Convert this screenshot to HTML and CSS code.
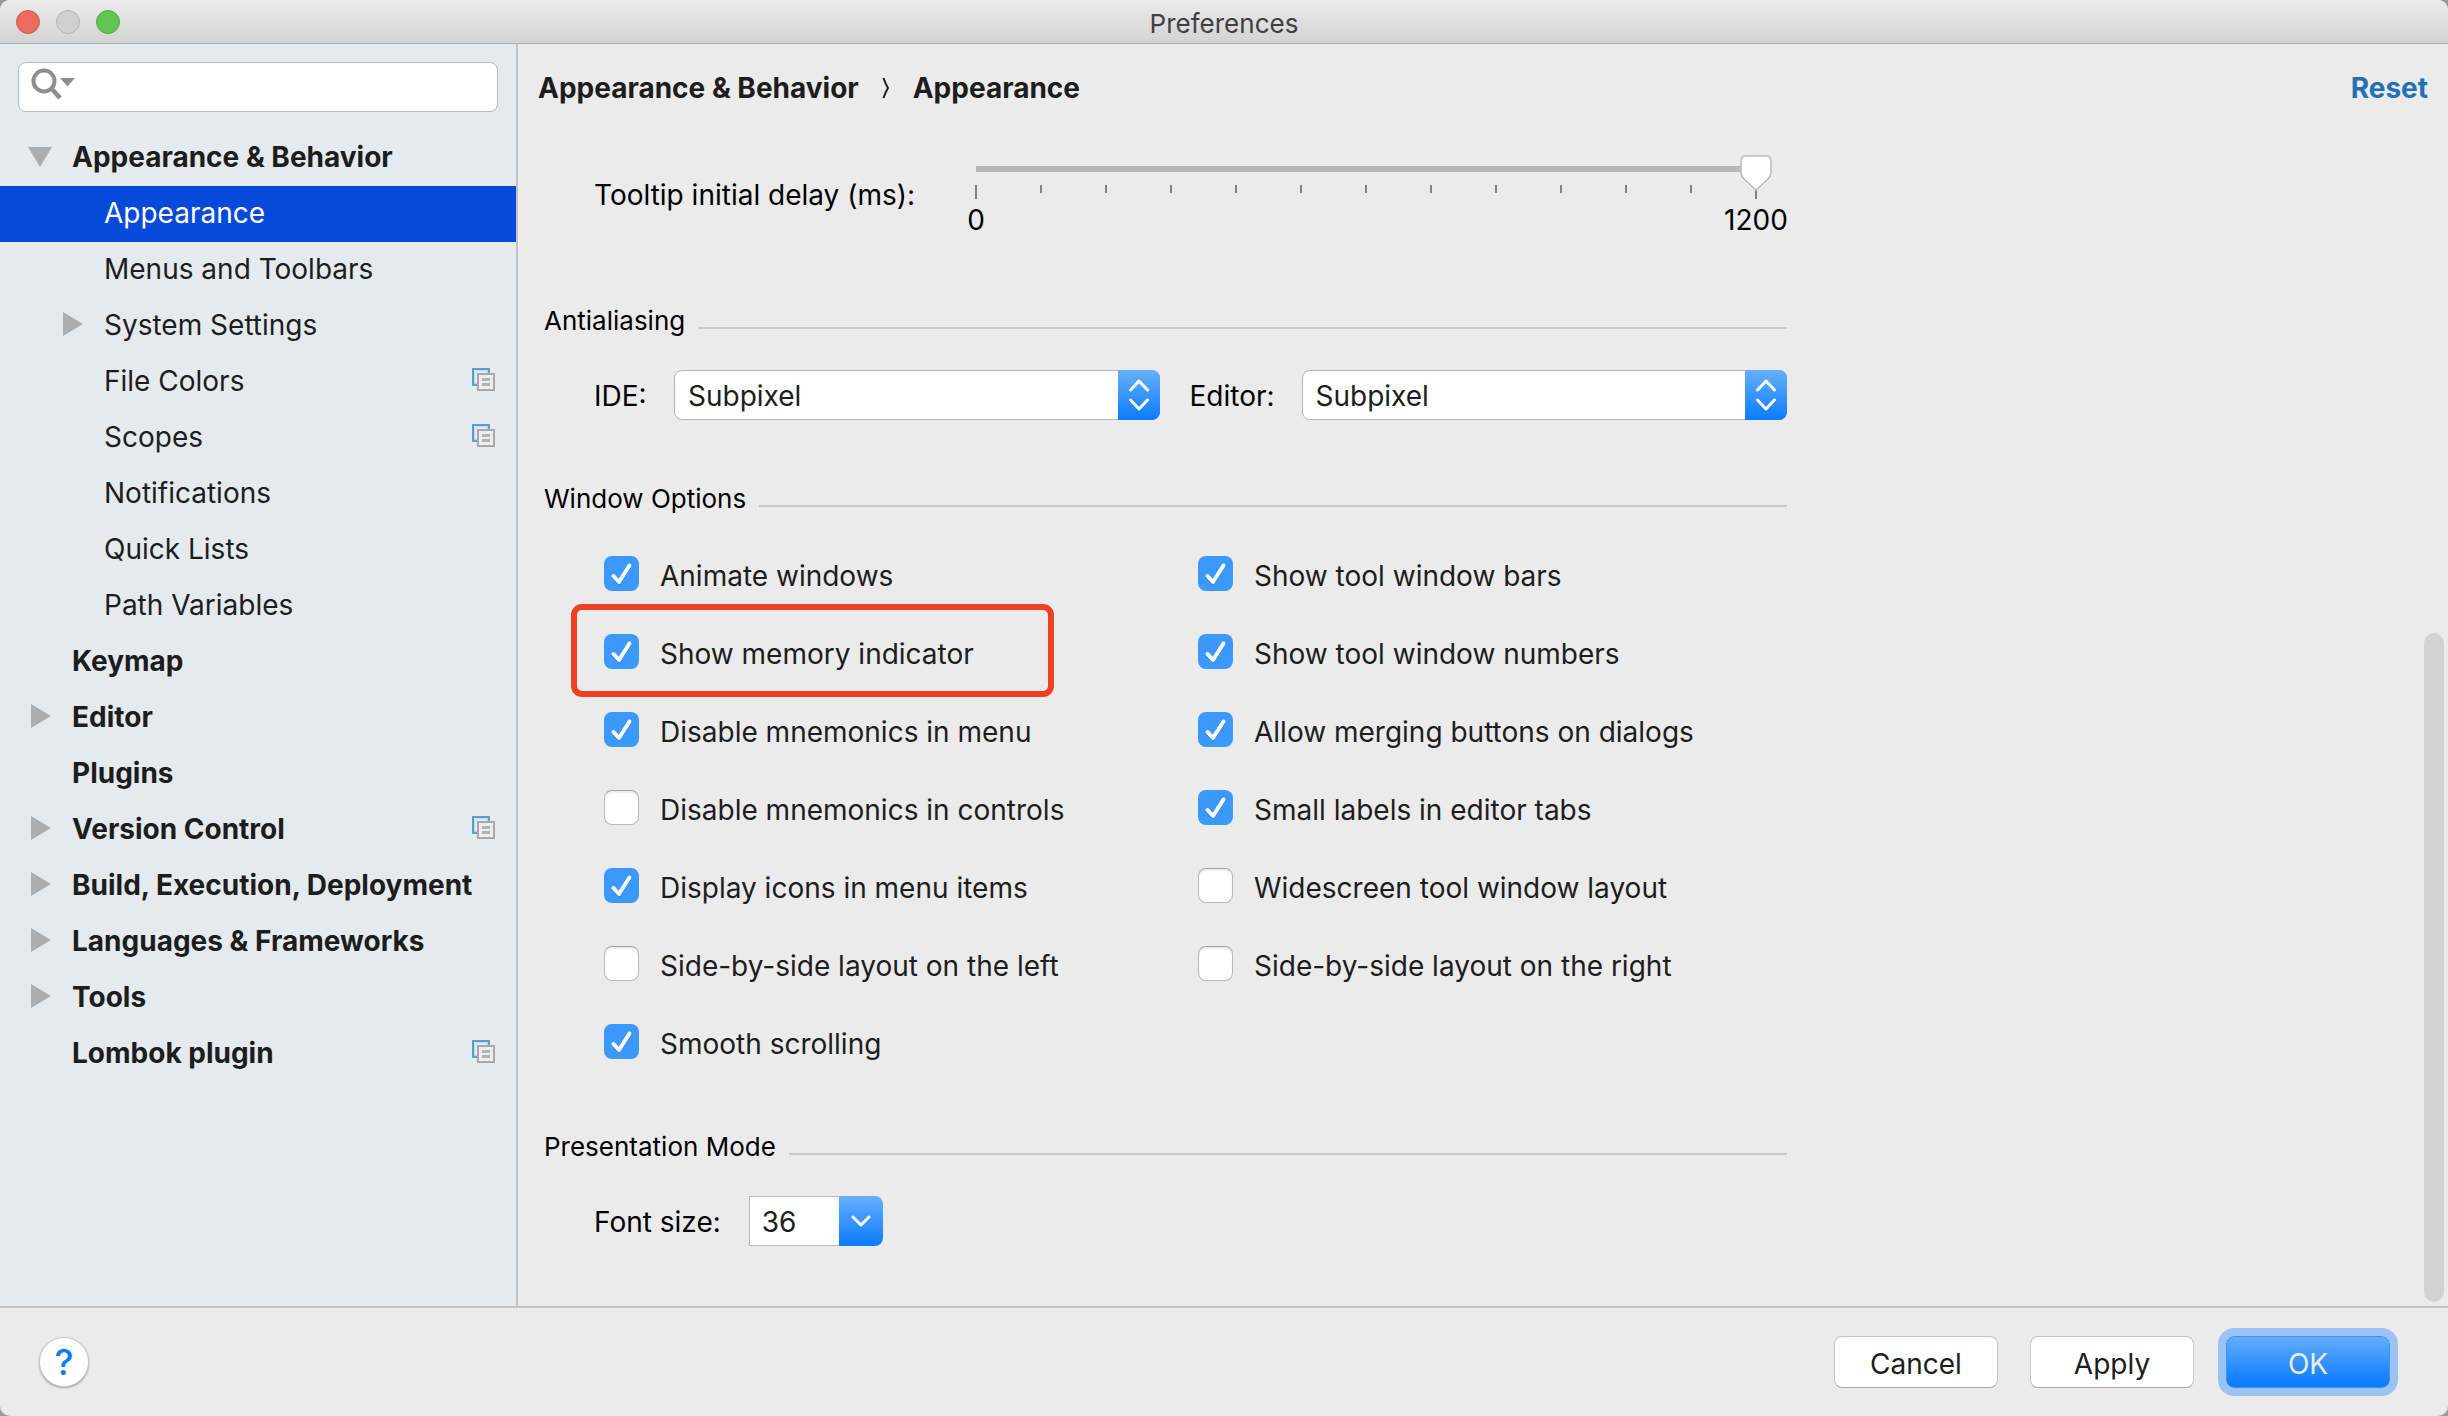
FILE: index.html
```html
<!DOCTYPE html>
<html lang="en">
<head>
<meta charset="utf-8">
<title>Preferences</title>
<link rel="stylesheet" href="styles.css">
</head>
<body>
<svg class="sprite" aria-hidden="true">
  <symbol id="copy" viewBox="0 0 23 23">
    <path d="M6 17H1V1h16v5" fill="none" stroke="#5f9fc4" stroke-width="2"/>
    <path d="M5 15.5H2.500V2.500H15.500V5" fill="none" stroke="#b5dcf0" stroke-width="1"/>
    <rect x="6" y="6" width="16" height="16" fill="#ededed" stroke="#a9a9a9" stroke-width="2"/>
    <path d="M10 11.500h8M10 16.500h8" stroke="#b3b3b3" stroke-width="3"/>
  </symbol>
  <symbol id="right" viewBox="0 0 20 24"><path d="M0 0 20 12 0 24Z" fill="#adadad"/></symbol>
  <symbol id="down" viewBox="0 0 24 20"><path d="M0 0H24L12 20Z" fill="#adadad"/></symbol>
</svg>
<div class="window">
  <header class="titlebar">
    <div class="lights">
      <button class="light close" aria-label="Close"></button>
      <button class="light minimize" aria-label="Minimize" disabled></button>
      <button class="light zoom" aria-label="Zoom"></button>
    </div>
    <h1>Preferences</h1>
  </header>

  <div class="content">
    <aside class="sidebar">
      <div class="search">
        <svg class="search-icon" width="44" height="32" viewBox="0 0 44 32" aria-hidden="true">
          <circle cx="13" cy="13" r="10.500" fill="none" stroke="#8f8f8f" stroke-width="4"/>
          <path d="M20 20l9 10" stroke="#8f8f8f" stroke-width="4.500"/>
          <path d="M29 10H44L36.500 18.500Z" fill="#8f8f8f"/>
        </svg>
        <input type="text" aria-label="Search settings">
      </div>
      <nav>
        <ul class="tree">
          <li><a class="group" href="#"><svg class="arrow-down"><use href="#down"/></svg><span>Appearance &amp; Behavior</span></a>
            <ul>
              <li><a class="selected" href="#" aria-current="page"><span>Appearance</span></a></li>
              <li><a href="#"><span>Menus and Toolbars</span></a></li>
              <li><a href="#"><svg class="arrow-right"><use href="#right"/></svg><span>System Settings</span></a></li>
              <li><a href="#"><span>File Colors</span><svg class="copy"><use href="#copy"/></svg></a></li>
              <li><a href="#"><span>Scopes</span><svg class="copy"><use href="#copy"/></svg></a></li>
              <li><a href="#"><span>Notifications</span></a></li>
              <li><a href="#"><span>Quick Lists</span></a></li>
              <li><a href="#"><span>Path Variables</span></a></li>
            </ul>
          </li>
          <li><a class="group" href="#"><span>Keymap</span></a></li>
          <li><a class="group" href="#"><svg class="arrow-right"><use href="#right"/></svg><span>Editor</span></a></li>
          <li><a class="group" href="#"><span>Plugins</span></a></li>
          <li><a class="group" href="#"><svg class="arrow-right"><use href="#right"/></svg><span>Version Control</span><svg class="copy"><use href="#copy"/></svg></a></li>
          <li><a class="group" href="#"><svg class="arrow-right"><use href="#right"/></svg><span>Build, Execution, Deployment</span></a></li>
          <li><a class="group" href="#"><svg class="arrow-right"><use href="#right"/></svg><span>Languages &amp; Frameworks</span></a></li>
          <li><a class="group" href="#"><svg class="arrow-right"><use href="#right"/></svg><span>Tools</span></a></li>
          <li><a class="group" href="#"><span>Lombok plugin</span><svg class="copy"><use href="#copy"/></svg></a></li>
        </ul>
      </nav>
    </aside>

    <main>
      <div class="page-head">
        <h2>Appearance &amp; Behavior</h2>
        <svg class="crumb" width="8" height="22" viewBox="0 0 8 22" aria-hidden="true"><path d="M1.500 1Q3.500 7 6 11 3.500 15 1.500 21" fill="none" stroke="#1d1d1d" stroke-width="2"/></svg>
        <h2>Appearance</h2>
        <a class="reset" href="#">Reset</a>
      </div>

      <form class="form">
        <div class="slider-row">
          <label for="delay">Tooltip initial delay (ms):</label>
          <div class="slider">
            <input type="range" id="delay" min="0" max="1200" step="100" value="1200">
            <div class="ticks"><i></i><i></i><i></i><i></i><i></i><i></i><i></i><i></i><i></i><i></i><i></i><i></i><i></i></div>
            <div class="scale"><span>0</span><span>1200</span></div>
          </div>
        </div>

        <section class="antialiasing">
          <h3>Antialiasing</h3>
          <div class="selects">
            <label for="ide">IDE:</label>
            <div class="select"><select id="ide"><option>Subpixel</option></select></div>
            <label for="editor">Editor:</label>
            <div class="select"><select id="editor"><option>Subpixel</option></select></div>
          </div>
        </section>

        <section class="window-options">
          <h3>Window Options</h3>
          <div class="options">
            <div>
              <label><input type="checkbox" checked>Animate windows</label>
              <label class="highlighted"><input type="checkbox" checked>Show memory indicator</label>
              <label><input type="checkbox" checked>Disable mnemonics in menu</label>
              <label><input type="checkbox">Disable mnemonics in controls</label>
              <label><input type="checkbox" checked>Display icons in menu items</label>
              <label><input type="checkbox">Side-by-side layout on the left</label>
              <label><input type="checkbox" checked>Smooth scrolling</label>
            </div>
            <div>
              <label><input type="checkbox" checked>Show tool window bars</label>
              <label><input type="checkbox" checked>Show tool window numbers</label>
              <label><input type="checkbox" checked>Allow merging buttons on dialogs</label>
              <label><input type="checkbox" checked>Small labels in editor tabs</label>
              <label><input type="checkbox">Widescreen tool window layout</label>
              <label><input type="checkbox">Side-by-side layout on the right</label>
            </div>
          </div>
        </section>

        <section class="presentation">
          <h3>Presentation Mode</h3>
          <div class="font-size">
            <label for="size">Font size:</label>
            <div class="combo">
              <input type="text" id="size" value="36">
              <button type="button" aria-label="Show sizes"><svg width="20" height="12" viewBox="0 0 20 12"><path d="M2 2l8 8 8-8" fill="none" stroke="#fff" stroke-width="3" stroke-linecap="round" stroke-linejoin="round"/></svg></button>
            </div>
          </div>
        </section>
      </form>
      <div class="scrollbar"></div>
    </main>
  </div>

  <footer class="footer">
    <button class="help" aria-label="Help">?</button>
    <button class="button">Cancel</button>
    <button class="button">Apply</button>
    <button class="button primary">OK</button>
  </footer>
</div>
</body>
</html>
```

FILE: styles.css
```css
*, *::before, *::after { box-sizing: border-box; }

body {
  margin: 0;
  background: #9a9a9a;
  color: #1d1d1d;
  font: 28px/32px Inter, "Liberation Sans", sans-serif;
}

h1, h2, h3, ul { margin: 0; padding: 0; }
h1, h3 { font-weight: 400; }
ul { list-style: none; }
a { color: inherit; text-decoration: none; }
input, select, button { font: inherit; color: inherit; margin: 0; }
.sprite { display: none; }

.window {
  display: flex;
  flex-direction: column;
  min-height: 100vh;
  background: #ebebeb;
  border-radius: 10px;
  overflow: hidden;
}

/* Title bar */
.titlebar {
  display: grid;
  grid-template-columns: 1fr auto 1fr;
  align-items: center;
  height: 44px;
  padding: 0 16px;
  background: linear-gradient(#ebebeb, #d3d3d3);
  border-bottom: 1px solid #b1b1b1;
}
.titlebar h1 { font-size: 26px; color: #404040; padding-top: 4px; }
.lights { display: flex; gap: 16px; }
.light {
  width: 24px;
  height: 24px;
  padding: 0;
  border: 1px solid;
  border-radius: 50%;
}
.close { background: #ed6a5f; border-color: #d5574c; }
.minimize { background: #d0d0d0; border-color: #b4b4b4; }
.zoom { background: #61c555; border-color: #50a945; }

.content { display: flex; flex: 1; }

/* Sidebar */
.sidebar {
  flex: none;
  width: 518px;
  padding-top: 18px;
  background: #e5eaee;
  border-right: 2px solid #c3c3c5;
}
.search {
  display: flex;
  height: 50px;
  margin: 0 18px 18px;
  padding: 5px 12px;
  gap: 8px;
  background: #fff;
  border: 1px solid #b9b9bd;
  border-radius: 8px;
}
.search input { flex: 1; min-width: 0; border: 0; outline: 0; background: none; }
.search-icon { flex: none; }

.tree a {
  display: flex;
  align-items: center;
  height: 56px;
  padding: 0 21px 2px 104px;
}
.tree .group { padding-left: 72px; font-weight: 700; }
.tree .selected { background: #0749d9; color: #fff; }
.tree span { white-space: nowrap; }
.arrow-right { flex: none; width: 20px; height: 24px; margin: 0 21px 2px -41px; }
.arrow-down { flex: none; width: 24px; height: 20px; margin: 0 20px 0 -44px; }
.copy { flex: none; width: 23px; height: 23px; margin: 0 0 4px auto; }

/* Settings page */
main { position: relative; flex: 1; min-width: 0; }
.page-head {
  display: flex;
  align-items: center;
  height: 88px;
  padding: 0 20px;
}
.page-head h2 { font-size: 28px; font-weight: 700; }
.crumb { margin: 0 23px; }
.reset { margin-left: auto; color: #2470b3; font-weight: 700; }

.form {
  max-width: 1269px;
  padding: 23px 0 48px 26px;
  color: #000;
}
.form h3 {
  display: flex;
  align-items: center;
  gap: 13px;
  font-size: 26px;
}
.form h3::after {
  content: "";
  flex: 1;
  height: 2px;
  margin-top: 14px;
  background: #c9c9c9;
}

.slider-row {
  display: grid;
  grid-template-columns: 366px 1fr;
  align-items: center;
  padding: 0 15px 0 50px;
}
.slider input {
  position: relative;
  z-index: 1;
  display: block;
  width: 100%;
  height: 36px;
  appearance: none;
  background: linear-gradient(#b7b7b7, #b7b7b7) 16px 11px / calc(100% - 32px) 6px no-repeat;
}
.slider input::-webkit-slider-thumb {
  appearance: none;
  width: 32px;
  height: 36px;
  border: 0;
  background: url("data:image/svg+xml,%3Csvg xmlns='http://www.w3.org/2000/svg' width='32' height='36'%3E%3Cpath d='M6 1H26Q31 1 31 6V17Q31 21 28 24L16 35 4 24Q1 21 1 17V6Q1 1 6 1Z' fill='%23fff' stroke='%23bdbdbd' stroke-width='1.5'/%3E%3C/svg%3E");
}
.ticks { display: flex; justify-content: space-between; margin: -6px 15px 0; height: 14px; }
.ticks i { width: 2px; height: 8px; background: #838383; }
.ticks i:first-child, .ticks i:last-child { height: 14px; }
.scale { display: flex; justify-content: space-between; margin: 7px -16px 0; line-height: 28px; }
.scale span { width: 64px; text-align: center; }

.antialiasing { margin-top: 71px; }
.selects {
  display: grid;
  grid-template-columns: 50px 1fr 82px 1fr;
  column-gap: 30px;
  align-items: center;
  margin-top: 33px;
  padding-left: 50px;
}
.selects label { padding-top: 2px; }
.select { position: relative; height: 50px; }
.select select {
  width: 100%;
  height: 100%;
  padding: 2px 56px 0 13px;
  appearance: none;
  background: #fff;
  border: 1px solid #b5b5b5;
  border-radius: 8px;
  color: #1d1d1d;
}
.select::after {
  content: "";
  position: absolute;
  inset: 0 0 0 auto;
  width: 42px;
  border-radius: 0 8px 8px 0;
  pointer-events: none;
  background:
    url("data:image/svg+xml,%3Csvg xmlns='http://www.w3.org/2000/svg' width='22' height='32' fill='none' stroke='%23fff' stroke-width='3' stroke-linecap='round' stroke-linejoin='round'%3E%3Cpath d='M2.500 11 11 2l8.500 9M2.500 21 11 30l8.500-9'/%3E%3C/svg%3E") center / 22px 32px no-repeat,
    linear-gradient(#67affb, #0a7cff);
}

.window-options { margin-top: 63px; }
.options {
  display: grid;
  grid-template-columns: 1fr 1fr;
  column-gap: 5px;
  margin-top: 22px;
  padding-left: 60px;
  color: #1d1d1d;
}
.options label {
  position: relative;
  display: flex;
  align-items: center;
  gap: 21px;
  height: 78px;
}
.options input {
  flex: none;
  width: 35px;
  height: 35px;
  margin-bottom: 5px;
  appearance: none;
  background: #fff;
  border: 1px solid #b9b9b9;
  border-top-color: #a3a3a3;
  border-radius: 8px;
  box-shadow: inset 0 2px 2px #ececec;
}
.options input:checked {
  border: 0;
  box-shadow: none;
  background: #3b99fc url("data:image/svg+xml,%3Csvg xmlns='http://www.w3.org/2000/svg' width='35' height='35' fill='none' stroke-width='4' stroke-linecap='round' stroke-linejoin='round'%3E%3Cpath d='M9.500 21 15 27 25.500 10.500' stroke='%232f83e0'/%3E%3Cpath d='M9.500 20 15 26 25.500 9.500' stroke='%23fff'/%3E%3C/svg%3E");
}
.highlighted::after {
  content: "";
  position: absolute;
  inset: -11px auto -4px -33px;
  width: 483px;
  border: 6px solid #ee4023;
  border-radius: 11px;
}

.presentation { margin-top: 48px; }
.font-size {
  display: flex;
  align-items: center;
  gap: 28px;
  margin-top: 33px;
  padding-left: 50px;
}
.font-size label { padding-top: 2px; }
.combo { display: flex; width: 134px; height: 50px; }
.combo input {
  flex: 1;
  min-width: 0;
  padding: 2px 12px 0;
  background: #fff;
  border: 1px solid #b9b9b9;
  border-right: 0;
  color: #1d1d1d;
}
.combo button {
  display: grid;
  place-items: center;
  width: 44px;
  padding: 0;
  border: 0;
  border-radius: 0 8px 8px 0;
  background: linear-gradient(#67affb, #0a7cff);
}

.scrollbar {
  position: absolute;
  right: 4px;
  bottom: 4px;
  width: 20px;
  height: 53%;
  border-radius: 10px;
  background: #d3d3d3;
}

/* Footer */
.footer {
  display: flex;
  align-items: center;
  gap: 32px;
  height: 110px;
  padding: 0 58px 0 39px;
  border-top: 2px solid #c3c3c5;
}
.help {
  width: 50px;
  height: 50px;
  margin-right: auto;
  padding: 0;
  border: 1px solid #c9c9c9;
  border-radius: 50%;
  background: #fff;
  box-shadow: 0 1px 2px #999;
  color: #0a7cff;
  font-size: 36px;
  font-weight: 500;
}
.button {
  width: 164px;
  height: 52px;
  padding: 3px 0 0;
  border: 1px solid #c4c4c4;
  border-bottom-color: #a6a6a6;
  border-radius: 8px;
  background: #fff;
}
.primary {
  border-color: #3b93f5;
  background: linear-gradient(#61aefb, #0f7dff 90%);
  box-shadow: 0 0 0 8px #9ac3f3;
  color: #ececec;
}
```
